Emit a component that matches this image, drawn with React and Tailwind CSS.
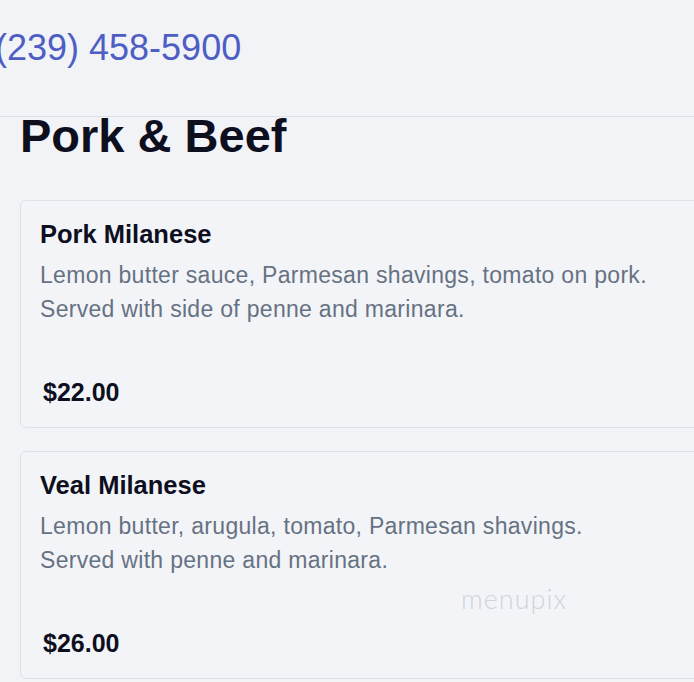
export default function App() {
  const items = [
    {
      name: "Pork Milanese",
      desc: ["Lemon butter sauce, Parmesan shavings, tomato on pork.", "Served with side of penne and marinara."],
      price: "$22.00",
    },
    {
      name: "Veal Milanese",
      desc: ["Lemon butter, arugula, tomato, Parmesan shavings.", "Served with penne and marinara."],
      price: "$26.00",
    },
  ];
  return (
    <div className="relative w-[694px] h-[682px] overflow-hidden bg-[#f2f3f7] font-['Liberation_Sans',Arial,sans-serif]">
      <div className="pt-[26px] h-[116px]">
        <div className="ml-[-5px] text-[36px] leading-[44px] text-[#4e5ec4] whitespace-nowrap">(239) 458-5900</div>
      </div>
      <div className="border-t border-[#dfe1e7]" />
      <h2 className="ml-[20px] text-[47px] leading-[38px] font-bold text-[#0e0f1e]">Pork &amp; Beef</h2>
      <div className="mt-[45px] ml-[20px] flex flex-col gap-[23px]">
        {items.map((it) => (
          <div key={it.name} className="w-[700px] h-[228px] rounded-[6px] border border-[#dfe1e6] bg-[#f3f4f8] pl-[19px] pt-[18px]">
            <div className="text-[25.5px] leading-[30px] font-bold text-[#0e0f1e]">{it.name}</div>
            <div className="mt-[9px] text-[23px] leading-[34px] tracking-[0.3px] text-[#667282]">
              {it.desc.map((d) => (
                <div key={d}>{d}</div>
              ))}
            </div>
            <div className="mt-[52px] ml-[3px] text-[25px] leading-[28px] font-bold text-[#0e0f1e]">{it.price}</div>
          </div>
        ))}
      </div>
      <div className="absolute left-[461px] top-[584px] text-[27px] leading-[30px] font-light text-[#d2d3d8] font-['Lato',sans-serif] tracking-[1px]">menupix</div>
    </div>
  );
}
